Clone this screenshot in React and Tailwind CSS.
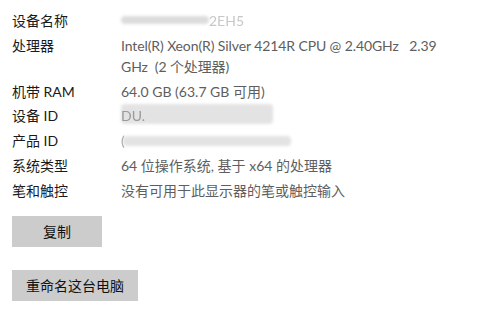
import React from "react";

const Blur = ({ className }) => (
  <div className={"rounded-sm blur-[1.5px] " + className} />
);

export default function App() {
  const rows = [
    { k: "设备名称", v: "name" },
    { k: "处理器", v: "cpu" },
    { k: "机带 RAM", v: "64.0 GB (63.7 GB 可用)" },
    { k: "设备 ID", v: "devid" },
    { k: "产品 ID", v: "prodid" },
    { k: "系统类型", v: "64 位操作系统, 基于 x64 的处理器" },
    { k: "笔和触控", v: "没有可用于此显示器的笔或触控输入" },
  ];
  const renderV = (v) => {
    if (v === "name")
      return (
        <div className="relative h-[21px]">
          <Blur className="absolute left-0 top-[6px] h-[8px] w-[88px] bg-[#dcdcdc]" />
          <span className="absolute left-[88px] top-0 text-[#c8c8c8] blur-[0.6px]">2EH5</span>
        </div>
      );
    if (v === "cpu")
      return (
        <div className="whitespace-pre tracking-[-0.1px]">
          {"Intel(R) Xeon(R) Silver 4214R CPU @ 2.40GHz   2.39"}
          <br />
          {"GHz  (2 个处理器)"}
        </div>
      );
    if (v === "devid")
      return (
        <div className="relative h-[21px]">
          <Blur className="absolute left-0 -top-[1px] h-[20px] w-[152px] bg-[#e3e3e3]" />
          <span className="absolute left-0 top-0 text-[#9a9a9a] blur-[0.5px]">DU.</span>
        </div>
      );
    if (v === "prodid")
      return (
        <div className="relative h-[21px]">
          <Blur className="absolute left-[2px] top-[6px] h-[10px] w-[168px] bg-[#e3e3e3]" />
          <span className="absolute left-0 top-0 text-[#aaaaaa] blur-[0.5px]">(</span>
        </div>
      );
    return v;
  };
  return (
    <div
      className="w-[486px] h-[323px] bg-white overflow-hidden px-[12px] pt-[10px] text-[14px] leading-[21px]"
      style={{ fontFamily: 'Lato, "Noto Sans CJK SC", sans-serif' }}
    >
      <div className="flex flex-col gap-[3.8px]">
        {rows.map((r) => (
          <div key={r.k} className="grid grid-cols-[109px_1fr]">
            <div className="text-[#1a1a1a]">{r.k}</div>
            <div className="text-[#5e5e5e]">{renderV(r.v)}</div>
          </div>
        ))}
      </div>
      <div className="mt-[15px] flex flex-col items-start gap-[23px]">
        <button className="w-[90px] h-[31px] bg-[#cccccc] text-[#111] text-[14px]">复制</button>
        <button className="w-[126px] h-[31px] bg-[#cccccc] text-[#111] text-[14px]">重命名这台电脑</button>
      </div>
    </div>
  );
}
